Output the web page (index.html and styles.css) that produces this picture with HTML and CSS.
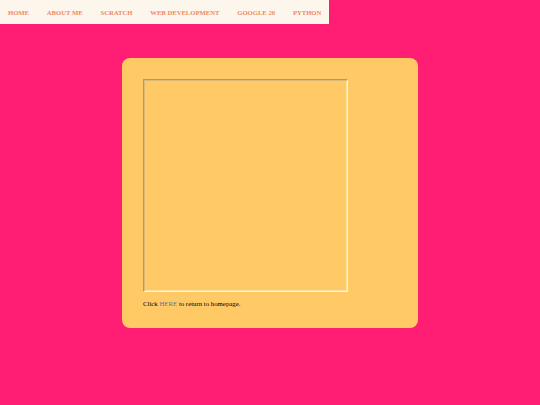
FILE: index.html
```html
<!DOCTYPE html>
<html lang="en">
<head>
<meta charset="utf-8">
<title>Project</title>
<link rel="stylesheet" href="styles.css">
</head>
<body>
<nav class="topnav">
  <a class="navlink" href="#">HOME</a>
  <a class="navlink" href="#">ABOUT ME</a>
  <a class="navlink" href="#">SCRATCH</a>
  <a class="navlink" href="#">WEB DEVELOPMENT</a>
  <a class="navlink" href="#">GOOGLE 20</a>
  <a class="navlink" href="#">PYTHON</a>
</nav>
<main class="card">
  <iframe class="frame" title="project"></iframe>
  <p class="note">Click <a class="herelink" href="#">HERE</a> to return to homepage.</p>
</main>
</body>
</html>
```

FILE: styles.css
```css
html, body {
  margin: 0;
  padding: 0;
}
body {
  background: #ff1e73;
  font-family: "Liberation Serif", "Times New Roman", serif;
  height: 405px;
}
.topnav {
  display: flex;
  box-sizing: border-box;
  width: fit-content;
  height: 24px;
  align-items: center;
  gap: 17.8px;
  padding: 1px 8px 0;
  background: #fdf6ec;
}
.navlink {
  font-size: 6.65px;
  font-weight: bold;
  color: #ee8862;
  text-decoration: none;
  line-height: 8px;
}
.card {
  width: 254px;
  margin: 34px auto 0;
  padding: 21px 21px 20px;
  background: #ffca66;
  border-radius: 8px;
}
.frame {
  display: block;
  box-sizing: border-box;
  width: 205px;
  height: 213px;
  border: 1px solid;
  border-color: #a89a80 #fff3d6 #fff3d6 #a89a80;
  box-shadow: inset 1px 1px 0 #d9b878, inset -1px -1px 0 #ffe2a6;
  background: transparent;
}
.note {
  margin: 8px 0 0;
  font-size: 6.8px;
  line-height: 8px;
  color: #000000;
}
.herelink {
  color: #66709c;
  text-decoration: none;
}
```
